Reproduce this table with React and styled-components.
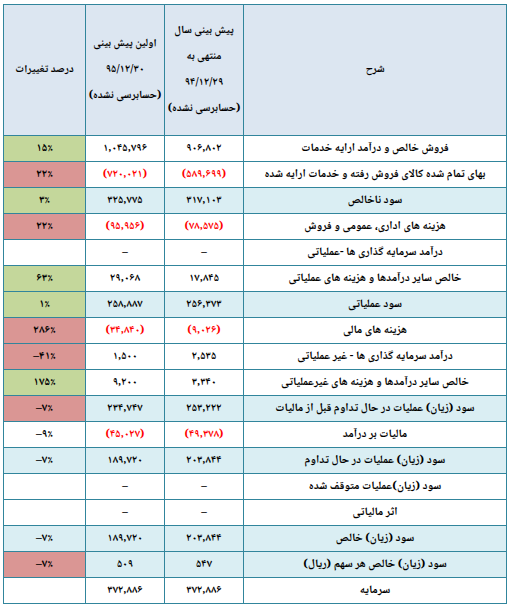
import React from 'react';
import styled, { createGlobalStyle } from 'styled-components';

const GlobalStyle = createGlobalStyle`
  body {
    margin: 0;
    background: #ffffff;
  }
`;

const Wrapper = styled.div`
  padding: 4px 3px 0 3px;
  font-family: 'Noto Naskh Arabic', 'Noto Sans Arabic', 'DejaVu Sans', sans-serif;
`;

const Table = styled.table`
  direction: rtl;
  border-collapse: collapse;
  table-layout: fixed;
  width: 503px;
  font-size: 11px;
  font-weight: bold;
  color: #000;
`;

const HeadCell = styled.th`
  height: 130px;
  padding: 0 2px;
  background: #dce6f1;
  border: 1px solid #31859c;
  font-weight: bold;
  font-size: 11px;
  text-align: center;
  vertical-align: middle;
  line-height: 26px;
`;

const Line = styled.div`
  white-space: nowrap;
  direction: ${(p) => (p.$ltr ? 'ltr' : 'rtl')};
`;

const Row = styled.tr`
  height: 26px;
  background: ${(p) => (p.$shade ? '#daeef3' : '#ffffff')};
`;

const Cell = styled.td`
  padding: 0 2px;
  border: 1px solid #31859c;
  text-align: center;
  vertical-align: middle;
  white-space: nowrap;
  overflow: hidden;
  color: ${(p) => (p.$neg ? '#ff0000' : '#000000')};
  direction: ${(p) => (p.$ltr ? 'ltr' : 'rtl')};
`;

const TitleCell = styled(Cell)`
  font-size: 11.5px;
`;

const PctCell = styled(Cell)`
  font-size: 11.5px;
  background: ${(p) =>
    p.$tone === 'up' ? '#c4d79b' : p.$tone === 'down' ? '#da9694' : 'transparent'};
`;

const rows = [
  { title: 'فروش خالص و درآمد ارایه خدمات', a: '۹۰۶,۸۰۲', b: '۱,۰۴۵,۷۹۶', pct: '۱۵٪', tone: 'up' },
  { title: 'بهای تمام شده کالای فروش رفته و خدمات ارایه شده', a: '(۵۸۹,۶۹۹)', b: '(۷۲۰,۰۲۱)', neg: true, pct: '۲۲٪', tone: 'down' },
  { title: 'سود ناخالص', a: '۳۱۷,۱۰۳', b: '۳۲۵,۷۷۵', pct: '۳٪', tone: 'up', shade: true },
  { title: 'هزینه های اداری، عمومی و فروش', a: '(۷۸,۵۷۵)', b: '(۹۵,۹۵۶)', neg: true, pct: '۲۲٪', tone: 'down' },
  { title: 'درآمد سرمایه گذاری ها -عملیاتی', a: '–', b: '–', pct: '' },
  { title: 'خالص سایر درآمدها و هزینه های عملیاتی', a: '۱۷,۸۴۵', b: '۲۹,۰۶۸', pct: '۶۳٪', tone: 'up' },
  { title: 'سود عملیاتی', a: '۲۵۶,۳۷۳', b: '۲۵۸,۸۸۷', pct: '۱٪', tone: 'up', shade: true },
  { title: 'هزینه های مالی', a: '(۹,۰۲۶)', b: '(۳۴,۸۴۰)', neg: true, pct: '۲۸۶٪', tone: 'down' },
  { title: 'درآمد سرمایه گذاری ها - غیر عملیاتی', a: '۲,۵۳۵', b: '۱,۵۰۰', pct: '–۴۱٪', tone: 'down' },
  { title: 'خالص سایر درآمدها و هزینه های غیرعملیاتی', a: '۳,۳۴۰', b: '۹,۲۰۰', pct: '۱۷۵٪', tone: 'up' },
  { title: 'سود (زیان) عملیات در حال تداوم قبل از مالیات', a: '۲۵۳,۲۲۲', b: '۲۳۴,۷۴۷', pct: '–۷٪', tone: 'down', shade: true },
  { title: 'مالیات بر درآمد', a: '(۴۹,۳۷۸)', b: '(۴۵,۰۲۷)', neg: true, pct: '–۹٪' },
  { title: 'سود (زیان) عملیات در حال تداوم', a: '۲۰۳,۸۴۴', b: '۱۸۹,۷۲۰', pct: '–۷٪', shade: true },
  { title: 'سود (زیان)عملیات متوقف شده', a: '–', b: '–', pct: '' },
  { title: 'اثر مالیاتی', a: '–', b: '–', pct: '' },
  { title: 'سود (زیان) خالص', a: '۲۰۳,۸۴۴', b: '۱۸۹,۷۲۰', pct: '–۷٪', shade: true },
  { title: 'سود (زیان) خالص هر سهم (ریال)', a: '۵۴۷', b: '۵۰۹', pct: '–۷٪', tone: 'down', shade: true },
  { title: 'سرمایه', a: '۳۷۲,۸۸۶', b: '۳۷۲,۸۸۶', pct: '' },
];

export default function App() {
  return (
    <Wrapper>
      <GlobalStyle />
      <Table>
        <colgroup>
          <col style={{ width: 263 }} />
          <col style={{ width: 79 }} />
          <col style={{ width: 79 }} />
          <col style={{ width: 82 }} />
        </colgroup>
        <thead>
          <tr>
            <HeadCell>شرح</HeadCell>
            <HeadCell>
              <Line>پیش بینی سال</Line>
              <Line>منتهی به</Line>
              <Line $ltr>۹۴/۱۲/۲۹</Line>
              <Line>(حسابرسی نشده)</Line>
            </HeadCell>
            <HeadCell>
              <Line>اولین پیش بینی</Line>
              <Line $ltr>۹۵/۱۲/۳۰</Line>
              <Line>(حسابرسی نشده)</Line>
            </HeadCell>
            <HeadCell>درصد تغییرات</HeadCell>
          </tr>
        </thead>
        <tbody>
          {rows.map((r) => (
            <Row key={r.title} $shade={r.shade}>
              <TitleCell>{r.title}</TitleCell>
              <Cell $ltr $neg={r.neg}>{r.a}</Cell>
              <Cell $ltr $neg={r.neg}>{r.b}</Cell>
              <PctCell $ltr $tone={r.tone}>{r.pct}</PctCell>
            </Row>
          ))}
        </tbody>
      </Table>
    </Wrapper>
  );
}
